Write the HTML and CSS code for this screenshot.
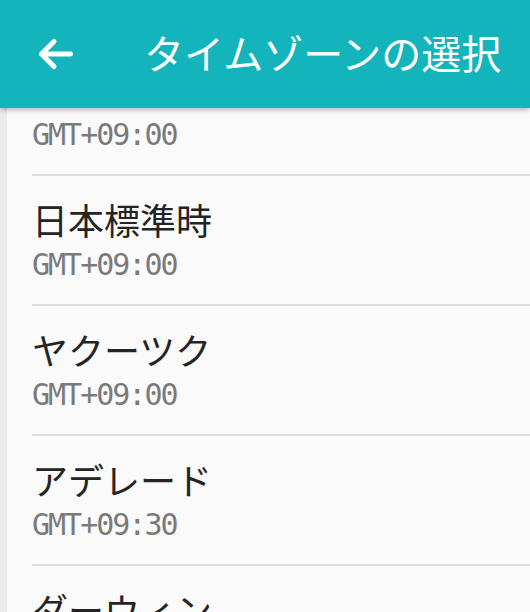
FILE: index.html
```html
<!DOCTYPE html>
<html lang="ja">
<head>
  <meta charset="utf-8">
  <title>タイムゾーンの選択</title>
  <link rel="stylesheet" href="styles.css">
</head>
<body>
  <header class="app-bar">
    <svg class="back-icon" width="40" height="40" viewBox="0 0 40 40">
      <path d="M34.5 20H5.5M18 7.5L5.5 20L18 32.5" fill="none" stroke="#ffffff" stroke-width="5" stroke-linecap="round" stroke-linejoin="round"/>
    </svg>
    <h1 class="app-title">タイムゾーンの選択</h1>
  </header>
  <main class="zone-view">
    <ul class="zone-list">
      <li class="zone-item">
        <div class="zone-name">ソウル</div>
        <div class="zone-offset">GMT+09:00</div>
      </li>
      <li class="zone-item">
        <div class="zone-name">日本標準時</div>
        <div class="zone-offset">GMT+09:00</div>
      </li>
      <li class="zone-item">
        <div class="zone-name">ヤクーツク</div>
        <div class="zone-offset">GMT+09:00</div>
      </li>
      <li class="zone-item">
        <div class="zone-name">アデレード</div>
        <div class="zone-offset">GMT+09:30</div>
      </li>
      <li class="zone-item">
        <div class="zone-name">ダーウィン</div>
        <div class="zone-offset">GMT+09:30</div>
      </li>
    </ul>
  </main>
</body>
</html>
```

FILE: styles.css
```css
html, body {
  margin: 0;
  height: 612px;
  overflow: hidden;
}

body {
  background-color: #fafafa;
  font-family: "Noto Sans CJK JP", "Noto Sans", sans-serif;
  display: flex;
  flex-direction: column;
}

.app-bar {
  position: relative;
  z-index: 1;
  display: flex;
  align-items: center;
  height: 108px;
  padding-left: 36px;
  background-color: #14b4bc;
  box-shadow: 0 2px 5px rgba(0, 0, 0, 0.28);
  flex-shrink: 0;
}

.back-icon {
  display: block;
  flex-shrink: 0;
}

.app-title {
  margin: 0 0 4px 68px;
  font-size: 40px;
  line-height: 40px;
  font-weight: normal;
  color: #ffffff;
  white-space: nowrap;
}

.zone-view {
  flex: 1;
  overflow: hidden;
  border-left: 7px solid #ebebeb;
}

/* la lista esta desplazada, el primer elemento queda bajo la barra */
.zone-list {
  list-style: none;
  margin: -62px 0 0 0;
  padding: 0;
}

.zone-item {
  margin-left: 25px;
  padding: 19px 0 21px;
  border-bottom: 2px solid #dcdcdc;
}

.zone-name {
  font-size: 36px;
  line-height: 48px;
  color: #242424;
  white-space: nowrap;
}

.zone-offset {
  margin-top: 4px;
  font-family: "DejaVu Sans Mono", "Liberation Mono", monospace;
  font-size: 30px;
  line-height: 36px;
  letter-spacing: -2px;
  color: #7a7a7a;
}
```
